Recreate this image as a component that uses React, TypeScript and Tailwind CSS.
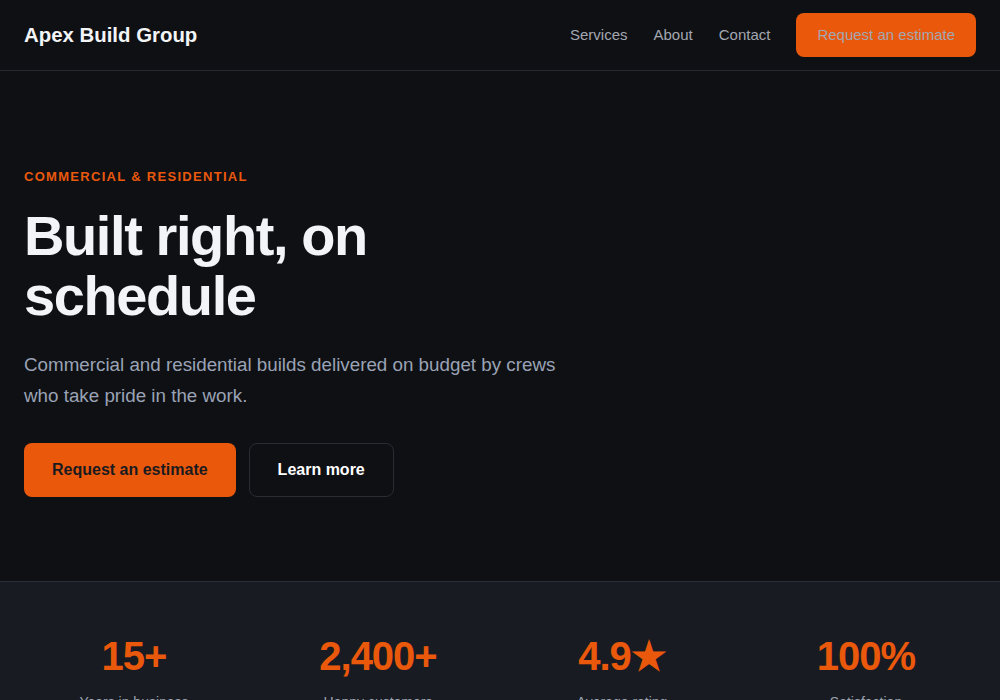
const navLinks = ["Services", "About", "Contact"];

const stats = [
  { value: "15+", label: "Years in business" },
  { value: "2,400+", label: "Happy customers" },
  { value: "4.9★", label: "Average rating" },
  { value: "100%", label: "Satisfaction" },
];

export default function App() {
  return (
    <div className="min-h-screen bg-[#0f1014] font-['Liberation_Sans',Arial,sans-serif] text-gray-100">
      {/* Header */}
      <header className="flex h-[71px] items-center justify-between border-b border-[#262830] px-6">
        <span className="text-[20.4px] font-bold text-gray-100">Apex Build Group</span>
        <nav className="flex items-center gap-[26px] text-[15px] text-[#a3a7b0]">
          {navLinks.map((link) => (
            <a key={link} href="#">
              {link}
            </a>
          ))}
          <a href="#" className="rounded-lg bg-[#ea580c] px-[21px] py-[11px] leading-[22px]">
            Request an estimate
          </a>
        </nav>
      </header>

      {/* Hero */}
      <section className="px-6 pt-24 pb-[84px]">
        <div className="max-w-xl">
          <p className="text-[13px] font-bold uppercase leading-5 tracking-[0.1em] text-[#ea580c]">
            Commercial &amp; Residential
          </p>
          <h1 className="mt-[19px] text-[56px] font-bold leading-[60px] tracking-tight text-[#f3f4f8]">
            Built right, on schedule
          </h1>
          <p className="mt-6 max-w-[540px] text-[18.8px] leading-[30.6px] text-[#9aa3b5]">
            Commercial and residential builds delivered on budget by crews who take pride in the work.
          </p>
        </div>
        <div className="mt-8 flex gap-[13px]">
          <a href="#" className="rounded-lg bg-[#ea580c] px-7 py-4 text-base font-bold leading-[22px] text-[#1a1b1f]">
            Request an estimate
          </a>
          <a
            href="#"
            className="rounded-lg border border-[#2a2c33] px-7 py-[15px] text-base font-bold leading-[22px] text-white"
          >
            Learn more
          </a>
        </div>
      </section>

      {/* Stats */}
      <section className="border-t border-[#2a2d35] bg-[#181b22] px-6 pt-[54px] pb-14">
        <div className="grid grid-cols-4 gap-6">
          {stats.map((s) => (
            <div key={s.label} className="text-center">
              <div className="text-[40px] font-bold leading-10 tracking-tight text-[#ea580c]">{s.value}</div>
              <div className="mt-4 text-sm text-[#9ca3af]">{s.label}</div>
            </div>
          ))}
        </div>
      </section>
    </div>
  );
}
